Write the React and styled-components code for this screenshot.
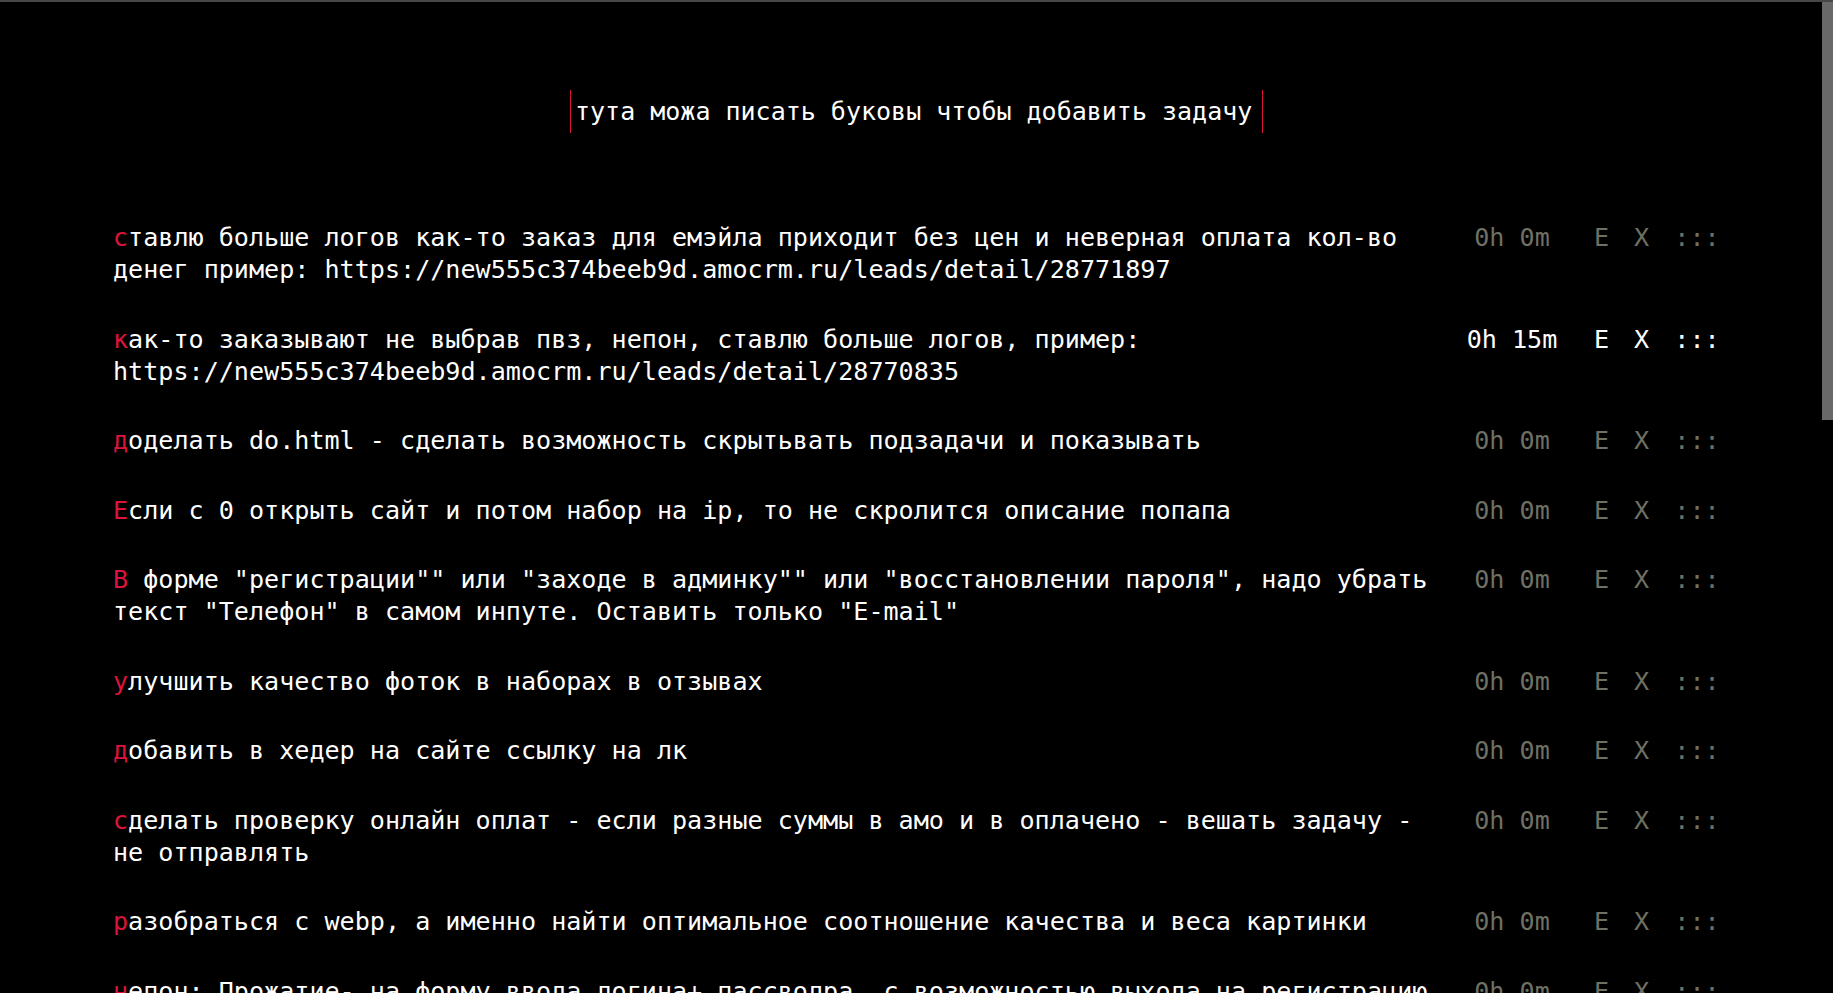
import React from 'react'
import styled, { createGlobalStyle } from 'styled-components';

const GlobalStyle = createGlobalStyle`
   html, body {
      margin: 0;
      padding: 0;
      height: 100%;
      overflow: hidden;
      background: #000;
   }
   #root {
      height: 100%;
   }
`;

const Window = styled.div`
   height: 100vh;
   box-sizing: border-box;
   display: flex;
   border-top: 2px solid #474747;
   background: #000;
   font-family: "DejaVu Sans Mono", "Liberation Mono", monospace;
   color: #fff;
`;
const Scroller = styled.main`
   flex: 1;
   overflow-y: auto;
   overflow-x: hidden;
   scrollbar-width: none;
   &::-webkit-scrollbar {
      display: none;
   }
`;
/* the page scrollbar, drawn as its own rail next to the list */
const Rail = styled.div`
   width: 11px;
   flex-shrink: 0;
   background: #000;
`;
const Thumb = styled.div`
   height: 418px;
   background: #686868;
`;
const Container = styled.div`
   padding: 88px 102px 60px 113px;
   display: flex;
   flex-direction: column;
`;
const NewTask = styled.input`
   align-self: center;
   width: 693px;
   height: 43px;
   box-sizing: border-box;
   padding: 0 2px 0 4px;
   margin: 0 0 89px;
   background: #000;
   border: none;
   border-left: 1px solid crimson;
   border-right: 1px solid crimson;
   outline: none;
   color: #fff;
   font-family: "DejaVu Sans Mono", "Liberation Mono", monospace;
   font-size: 25px;
   &::placeholder {
      color: #fff;
      opacity: 1;
   }
`;
const List = styled.ul`
   list-style: none;
   margin: 0;
   padding: 0;
   display: flex;
   flex-direction: column;
   gap: 37.5px;
`;
const Task = styled.li`
   display: grid;
   grid-template-columns: 1fr 108px 15px 15px 46px;
   column-gap: 25px;
   align-items: start;
   font-size: 25.1px;
   line-height: 32px;
`;
const Title = styled.div`
   color: #fff;
`;
const First = styled.span`
   color: crimson;
`;
const Time = styled.span`
   text-align: center;
   padding-right: 6px;
   white-space: nowrap;
   color: ${p => (p.$active ? '#fff' : '#6f7064')};
`;
const Action = styled.span`
   text-align: center;
   white-space: nowrap;
   cursor: pointer;
   color: ${p => (p.$active ? '#fff' : '#6f7064')};
`;

const tasks = [
   { text: 'ставлю больше логов как-то заказ для емэйла приходит без цен и неверная оплата кол-во денег пример: https://new555c374beeb9d.amocrm.ru/leads/detail/28771897', time: '0h 0m' },
   { text: 'как-то заказывают не выбрав пвз, непон, ставлю больше логов, пример: https://new555c374beeb9d.amocrm.ru/leads/detail/28770835', time: '0h 15m', active: true },
   { text: 'доделать do.html - сделать возможность скрытьвать подзадачи и показывать', time: '0h 0m' },
   { text: 'Если с 0 открыть сайт и потом набор на ip, то не скролится описание попапа', time: '0h 0m' },
   { text: 'В форме "регистрации"" или "заходе в админку"" или "восстановлении пароля", надо убрать текст "Телефон" в самом инпуте. Оставить только "E-mail"', time: '0h 0m' },
   { text: 'улучшить качество фоток в наборах в отзывах', time: '0h 0m' },
   { text: 'добавить в хедер на сайте ссылку на лк', time: '0h 0m' },
   { text: 'сделать проверку онлайн оплат - если разные суммы в амо и в оплачено - вешать задачу - не отправлять', time: '0h 0m' },
   { text: 'разобраться с webp, а именно найти оптимальное соотношение качества и веса картинки', time: '0h 0m' },
   { text: 'непон: Прожатие- на форму ввода логина+ пассволра, с возможностью выхода на регистрацию и обратно', time: '0h 0m' },
   { text: 'проверить отправку смс при оформлении заказа', time: '0h 0m' },
   { text: 'перенести скидки из старой админки в новую, проверить что промокоды работают и в корзине и в оформлении', time: '0h 0m' },
   { text: 'сделать выгрузку заказов в csv', time: '0h 0m' },
   { text: 'поправить вёрстку карточки товара на мобилке', time: '0h 0m' },
   { text: 'в личном кабинете не показывается история заказов, если заказ был сделан без регистрации', time: '0h 0m' },
   { text: 'обновить сертификат на тестовом домене', time: '0h 0m' },
   { text: 'почистить логи на сервере', time: '0h 0m' },
   { text: 'разобраться почему в амо дублируются сделки при повторной оплате, пример: https://new555c374beeb9d.amocrm.ru/leads/detail/28769904', time: '0h 0m' },
   { text: 'добавить ленивую загрузку картинок в отзывах', time: '0h 0m' },
   { text: 'написать тексты для страницы доставки', time: '0h 0m' },
   { text: 'проверить как работает попап подписки в сафари и на старых андроидах, если не работает - убрать', time: '0h 0m' },
   { text: 'сделать бэкап базы', time: '0h 0m' },
   { text: 'настроить редирект со старых ссылок каталога на новые, чтобы не терять позиции в поиске', time: '0h 0m' },
   { text: 'убрать лишние скрипты из футера', time: '0h 0m' },
];

const App = () => {
   return (
      <Window>
         <GlobalStyle />
         <Scroller>
            <Container>
               <NewTask placeholder="тута можа писать буковы чтобы добавить задачу" />
               <List>
                  {tasks.map((t, i) => (
                     <Task key={i}>
                        <Title>
                           <First>{t.text[0]}</First>
                           {t.text.slice(1)}
                        </Title>
                        <Time $active={t.active}>{t.time}</Time>
                        <Action $active={t.active}>E</Action>
                        <Action $active={t.active}>X</Action>
                        <Action $active={t.active}>:::</Action>
                     </Task>
                  ))}
               </List>
            </Container>
         </Scroller>
         <Rail>
            <Thumb />
         </Rail>
      </Window>
   )
}

export default App;
